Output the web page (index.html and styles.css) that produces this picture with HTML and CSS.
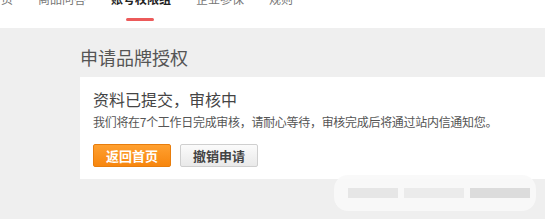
FILE: index.html
```html
<!DOCTYPE html>
<html lang="zh-CN">
<head>
    <meta charset="UTF-8">
    <title>申请品牌授权</title>
    <link rel="stylesheet" href="styles.css">
</head>
<body>
    <div class="topnav">
        <ul class="nav-list">
            <li>首页</li>
            <li>商品问答</li>
            <li class="active">账号权限组</li>
            <li>企业参保</li>
            <li>规则</li>
        </ul>
    </div>
    <div class="main">
        <h2 class="page-title">申请品牌授权</h2>
        <div class="card">
            <h3>资料已提交，审核中</h3>
            <p>我们将在7个工作日完成审核，请耐心等待，审核完成后将通过站内信通知您。</p>
            <div class="actions">
                <button class="btn btn-orange">返回首页</button>
                <button class="btn btn-gray">撤销申请</button>
            </div>
        </div>
    </div>
    <div class="watermark"><span></span><span></span><span></span></div>
</body>
</html>
```

FILE: styles.css
```css
body {
    margin: 0;
    font-family: "Noto Sans CJK SC", "Liberation Sans", sans-serif;
    background-color: #efefef;
    color: #333;
    overflow: hidden;
}
.topnav {
    background: #fff;
    height: 28px;
    overflow: hidden;
}
.nav-list {
    list-style: none;
    margin: -9px 0 0 -11px;
    padding: 0;
    display: flex;
    gap: 25px;
    font-size: 12px;
    line-height: 16px;
    color: #777;
}
.nav-list li {
    position: relative;
}
.nav-list .active {
    color: #222;
    font-weight: bold;
}
.nav-list .active::after {
    content: '';
    position: absolute;
    left: 15px;
    top: 27px;
    width: 28px;
    height: 3px;
    border-radius: 2px;
    background: #ec5a5a;
}
.main {
    padding: 17px 0 0 80px;
}
.page-title {
    margin: 0 0 8px;
    font-size: 18px;
    line-height: 24px;
    font-weight: normal;
    color: #555;
}
.card {
    background: #fff;
    padding: 11px 13px 12px;
}
.card h3 {
    margin: 0;
    font-size: 16px;
    line-height: 22px;
    font-weight: normal;
    color: #444;
}
.card p {
    margin: 3px 0 0;
    font-size: 12px;
    line-height: 18px;
    letter-spacing: -0.3px;
    color: #555;
}
.actions {
    display: flex;
    gap: 9px;
    margin-top: 13px;
}
.btn {
    width: 78px;
    height: 23px;
    padding: 0;
    font-family: inherit;
    font-size: 13px;
    font-weight: bold;
    border-radius: 2px;
    cursor: pointer;
}
.btn-orange {
    background: linear-gradient(#ffa030, #f7860e);
    border: 1px solid #e87d0c;
    color: #fff;
}
.btn-gray {
    background: linear-gradient(#fbfbfb, #e9e9e9);
    border: 1px solid #cfcfcf;
    color: #444;
}
.watermark {
    position: absolute;
    left: 334px;
    top: 175px;
    width: 202px;
    height: 36px;
    border-radius: 14px;
    background: rgba(248, 248, 248, 0.9);
    display: flex;
    align-items: center;
    gap: 6px;
    padding-left: 14px;
    box-sizing: border-box;
}
.watermark span {
    height: 10px;
    background: #e6e6e6;
}
.watermark span:nth-child(1) { width: 50px; }
.watermark span:nth-child(2) { width: 60px; background: #ebebeb; }
.watermark span:nth-child(3) { width: 60px; background: #dcdcdc; }
```
